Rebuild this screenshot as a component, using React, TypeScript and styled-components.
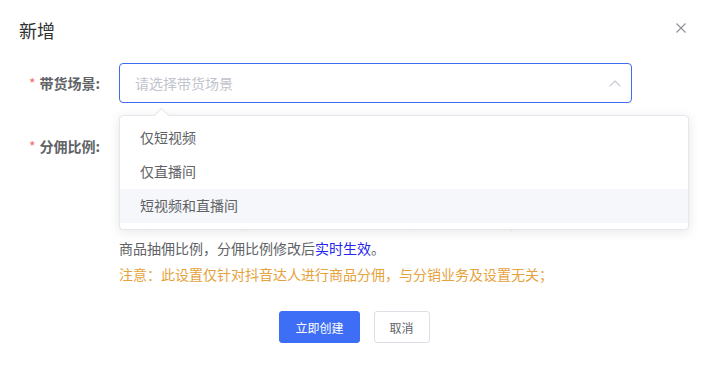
import React, { FC } from 'react';
import styled, { createGlobalStyle } from 'styled-components';

const GlobalStyle = createGlobalStyle`
   html, body {
      margin: 0;
      padding: 0;
      background: #fff;
   }

   body {
      font-family: "Noto Sans CJK SC", "Noto Sans", sans-serif;
      color: #606266;
      -webkit-font-smoothing: antialiased;
   }
`;

const scenes = ['仅短视频', '仅直播间', '短视频和直播间'];

const App: FC = () => {
   return (
      <>
         <GlobalStyle />
         <Dialog>
            <Header>
               <Title>新增</Title>
               <CloseButton aria-label="关闭">
                  <svg width="10" height="10" viewBox="0 0 10 10">
                     <path d="M0.5 0.5 L9.5 9.5 M9.5 0.5 L0.5 9.5" stroke="#909399" strokeWidth="1.2" fill="none" />
                  </svg>
               </CloseButton>
            </Header>

            <Body>
               <FormItem>
                  <Label required>带货场景:</Label>
                  <Field>
                     <SelectWrap>
                        <Select focused>
                           <Placeholder>请选择带货场景</Placeholder>
                           <svg width="12" height="7" viewBox="0 0 12 7">
                              <path d="M0.6 6.4 L6 1 L11.4 6.4" stroke="#c0c4cc" strokeWidth="1.1" fill="none" />
                           </svg>
                        </Select>
                        <Dropdown>
                           <PopperArrow />
                           {scenes.map((scene, i) => (
                              <Option key={scene} hovered={i === scenes.length - 1}>
                                 {scene}
                              </Option>
                           ))}
                        </Dropdown>
                     </SelectWrap>
                  </Field>
               </FormItem>

               <FormItem>
                  <Label required>分佣比例:</Label>
                  <Field>
                     <RateInput>
                        <Placeholder>请输入分佣比例</Placeholder>
                        <Suffix>%</Suffix>
                     </RateInput>
                     <Hint>
                        设置分佣比例后，达人推广带货成交的订单将按照该比例计算佣金，
                        <br />
                        比例范围为1%-50%，佣金按（商品实付金额×分佣比例）结算，即
                        <br />
                        商品抽佣比例，分佣比例修改后<Link>实时生效</Link>。
                     </Hint>
                     <Warning>注意：此设置仅针对抖音达人进行商品分佣，与分销业务及设置无关；</Warning>
                  </Field>
               </FormItem>
            </Body>

            <Footer>
               <Button primary>立即创建</Button>
               <Button>取消</Button>
            </Footer>
         </Dialog>
      </>
   );
};

const Dialog = styled.div`
   width: 709px;
   height: 372px;
   background: #fff;
   box-sizing: border-box;
   overflow: hidden;
`;

const Header = styled.div`
   display: flex;
   align-items: center;
   justify-content: space-between;
   padding: 18px 23px 0 19px;
`;

const Title = styled.span`
   font-size: 18px;
   line-height: 24px;
   color: #303133;
`;

const CloseButton = styled.button`
   display: flex;
   padding: 0;
   margin-top: -4px;
   border: none;
   background: none;
`;

const Body = styled.div`
   padding-top: 21px;
`;

const FormItem = styled.div`
   display: flex;
   align-items: flex-start;
   margin-bottom: 23px;
`;

const Label = styled.label<{ required?: boolean }>`
   width: 119px;
   box-sizing: border-box;
   padding-right: 19px;
   text-align: right;
   font-size: 14px;
   font-weight: 700;
   line-height: 40px;
   color: #606266;

   &::before {
      content: ${({ required }) => (required ? "'*'" : "''")};
      color: #f56c6c;
      font-weight: 400;
      margin-right: 4px;
   }
`;

const Field = styled.div`
   flex: 1;
`;

const SelectWrap = styled.div`
   position: relative;
   width: 513px;
`;

const Select = styled.div<{ focused?: boolean }>`
   display: flex;
   align-items: center;
   justify-content: space-between;
   height: 40px;
   box-sizing: border-box;
   padding: 0 10px 0 15px;
   border: 1px solid ${({ focused }) => (focused ? '#3e6cf0' : '#dcdfe6')};
   border-radius: 4px;
`;

const Placeholder = styled.span`
   font-size: 14px;
   color: #c0c4cc;
`;

const Dropdown = styled.ul`
   position: absolute;
   z-index: 10;
   top: calc(100% + 12px);
   left: 0;
   width: 570px;
   margin: 0;
   padding: 5px 0 6px;
   list-style: none;
   box-sizing: border-box;
   background: #fff;
   border: 1px solid #e4e7ed;
   border-radius: 4px;
   box-shadow: 0 2px 12px 0 rgba(0, 0, 0, 0.1);
`;

const PopperArrow = styled.span`
   position: absolute;
   top: -6px;
   left: 36px;
   width: 10px;
   height: 10px;
   background: #fff;
   border-top: 1px solid #e4e7ed;
   border-left: 1px solid #e4e7ed;
   transform: rotate(45deg);
`;

const Option = styled.li<{ hovered?: boolean }>`
   position: relative;
   height: 34px;
   padding: 0 20px;
   font-size: 14px;
   line-height: 33px;
   color: #606266;
   background: ${({ hovered }) => (hovered ? '#f5f7fa' : '#fff')};
`;

const RateInput = styled.div`
   display: flex;
   align-items: center;
   justify-content: space-between;
   width: 220px;
   height: 40px;
   box-sizing: border-box;
   padding: 0 15px;
   border: 1px solid #dcdfe6;
   border-radius: 4px;
`;

const Suffix = styled.span`
   font-size: 14px;
   color: #909399;
`;

const Hint = styled.p`
   margin: 17px 0 0;
   font-size: 14px;
   line-height: 26px;
   color: #606266;
`;

const Link = styled.span`
   color: #2525f0;
`;

const Warning = styled.p`
   margin: 0;
   font-size: 14px;
   line-height: 26px;
   color: #e6a23c;
`;

const Footer = styled.div`
   display: flex;
   justify-content: center;
   gap: 14px;
   padding-top: 1px;
`;

const Button = styled.button<{ primary?: boolean }>`
   height: 32px;
   padding: 0 15px;
   font-family: inherit;
   font-size: 12px;
   border-radius: 3px;
   border: 1px solid ${({ primary }) => (primary ? '#3e6ef5' : '#dcdfe6')};
   background: ${({ primary }) => (primary ? '#3e6ef5' : '#fff')};
   color: ${({ primary }) => (primary ? '#fff' : '#606266')};
`;

export default App;
